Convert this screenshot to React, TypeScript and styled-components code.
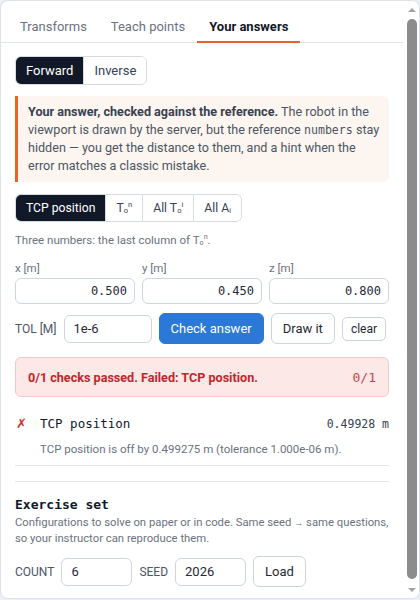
import { createGlobalStyle, styled } from "styled-components";

const GlobalStyle = createGlobalStyle`
  html, body {
    margin: 0;
    padding: 0;
    background: #eceff3;
    font-family: Roboto, "Noto Sans", sans-serif;
    color: #374151;
  }
  * {
    box-sizing: border-box;
  }
`;

const mono = `"DejaVu Sans Mono", "Liberation Mono", monospace`;

const Panel = styled.div`
  display: flex;
  width: 420px;
  height: 599px;
  background: #ffffff;
  border: 1px solid #dde2e9;
  border-radius: 8px;
  overflow: hidden;
`;

const Content = styled.div`
  flex: 1;
  min-width: 0;
  overflow: hidden;
`;

const ScrollTrack = styled.div`
  width: 15px;
  flex: none;
  display: flex;
  flex-direction: column;
  align-items: center;
  background: #ffffff;
`;

const Arrow = styled.div<{ $down?: boolean }>`
  height: 17px;
  display: flex;
  align-items: center;
  justify-content: center;
  &::after {
    content: "";
    border-left: 4px solid transparent;
    border-right: 4px solid transparent;
    ${(p) =>
      p.$down
        ? "border-top: 4px solid #a3a3a3;"
        : "border-bottom: 4px solid #a3a3a3;"}
  }
`;

const Thumb = styled.div`
  width: 10px;
  flex: 1;
  margin: 1px 0 2px;
  background: #8c8c8c;
  border-radius: 5px;
`;

const TabBar = styled.div`
  display: flex;
  padding: 0 7px;
  border-bottom: 1px solid #e1e5eb;
`;

const Tab = styled.div<{ $active?: boolean }>`
  padding: 17px 12px 6px;
  margin-bottom: -1px;
  font-size: 13px;
  line-height: 17px;
  white-space: nowrap;
  color: ${(p) => (p.$active ? "#111827" : "#6b7280")};
  font-weight: ${(p) => (p.$active ? 700 : 400)};
  border-bottom: 2px solid ${(p) => (p.$active ? "#e8622c" : "transparent")};
`;

const Body = styled.div`
  padding: 13px 15px 36px 14px;
`;

const Segmented = styled.div<{ $height: number }>`
  display: inline-flex;
  height: ${(p) => p.$height}px;
  border: 1px solid #d6dbe2;
  border-radius: 6px;
  overflow: hidden;
`;

const SegButton = styled.button<{ $active?: boolean; $size?: number }>`
  font-family: inherit;
  font-size: ${(p) => p.$size ?? 13}px;
  padding: 0 10px;
  white-space: nowrap;
  border: none;
  border-left: 1px solid #d6dbe2;
  background: ${(p) => (p.$active ? "#111827" : "#ffffff")};
  color: ${(p) => (p.$active ? "#ffffff" : "#374151")};
  &:first-child {
    border-left: none;
  }
`;

const Sub = styled.sub`
  font-size: 0.62em;
  line-height: 0;
  vertical-align: -1px;
`;

const Sup = styled.sup`
  font-size: 0.62em;
  line-height: 0;
  vertical-align: 5px;
`;

const Callout = styled.div`
  margin-top: 11px;
  padding: 7px 6px 7px 10px;
  background: #fdf5f0;
  border-left: 3px solid #e8622c;
  border-radius: 0 6px 6px 0;
  font-size: 12.6px;
  line-height: 18px;
  color: #4b5563;

  b {
    color: #374151;
  }
  code {
    font-family: ${mono};
    font-size: 11.6px;
  }
`;

const Tabs2 = styled.div`
  margin-top: 12px;
`;

const Hint = styled.div`
  margin-top: 10px;
  font-size: 11.5px;
  line-height: 16px;
  color: #6b7280;
`;

const VectorGrid = styled.div`
  margin-top: 12px;
  display: grid;
  grid-template-columns: repeat(3, 1fr);
  gap: 7px;
`;

const Field = styled.label`
  display: flex;
  flex-direction: column;
  gap: 2px;
  font-size: 11.5px;
  line-height: 16px;
  color: #6b7280;
`;

const NumInput = styled.input`
  height: 26px;
  width: 100%;
  border: 1px solid #cfd5dd;
  border-radius: 6px;
  padding: 0 7px;
  text-align: right;
  font-family: ${mono};
  font-size: 12px;
  color: #1f2937;
`;

const ActionRow = styled.div`
  margin-top: 9px;
  display: flex;
  align-items: center;
  gap: 7px;
`;

const SmallLabel = styled.span`
  font-size: 12px;
  white-space: nowrap;
  color: #4b5563;
  text-transform: uppercase;
`;

const TextInput = styled.input<{ $width: number }>`
  width: ${(p) => p.$width}px;
  height: 28px;
  border: 1px solid #cfd5dd;
  border-radius: 6px;
  padding: 0 9px;
  font-family: inherit;
  font-size: 13px;
  color: #1f2937;
`;

const Button = styled.button<{ $primary?: boolean; $small?: boolean }>`
  font-family: inherit;
  white-space: nowrap;
  height: ${(p) => (p.$small ? 24 : 31)}px;
  padding: 0 ${(p) => (p.$small ? 8 : 11)}px;
  font-size: ${(p) => (p.$small ? 12 : 13)}px;
  border-radius: ${(p) => (p.$small ? 5 : 6)}px;
  border: 1px solid ${(p) => (p.$primary ? "#2b78d6" : "#cdd3db")};
  background: ${(p) => (p.$primary ? "#2b78d6" : "#ffffff")};
  color: ${(p) => (p.$primary ? "#ffffff" : "#1f2937")};
`;

const Alert = styled.div`
  margin-top: 13px;
  height: 40px;
  display: flex;
  align-items: center;
  justify-content: space-between;
  padding: 0 12px;
  background: #fde8e8;
  border: 1px solid #f5c8c8;
  border-radius: 6px;
  color: #c0262d;
  font-size: 12.6px;
  font-weight: 700;
`;

const AlertCount = styled.span`
  font-family: ${mono};
  font-weight: 400;
  font-size: 13px;
  color: #c0474b;
`;

const Result = styled.div`
  margin-top: 18px;
  padding-bottom: 8px;
  border-bottom: 1px solid #e1e5eb;
`;

const ResultHead = styled.div`
  display: flex;
  align-items: center;
  line-height: 18px;
`;

const Cross = styled.span`
  width: 25px;
  padding-left: 1px;
  color: #d32f2f;
  font-family: "DejaVu Sans", sans-serif;
  font-size: 13px;
`;

const ResultName = styled.span`
  flex: 1;
  font-family: ${mono};
  font-size: 12.5px;
  color: #111827;
`;

const ResultValue = styled.span`
  font-family: ${mono};
  font-size: 11.5px;
  color: #374151;
`;

const ResultDetail = styled.div`
  margin-top: 8px;
  padding-left: 25px;
  font-size: 11.5px;
  line-height: 16px;
  color: #6b7280;
`;

const Section = styled.div`
  margin-top: 15px;
  padding-top: 14px;
  border-top: 1px solid #e1e5eb;
`;

const SectionTitle = styled.div`
  font-family: ${mono};
  font-weight: 700;
  font-size: 13px;
  line-height: 18px;
  color: #111827;
`;

const SectionText = styled.div`
  margin-top: 1px;
  font-size: 11.3px;
  line-height: 16px;
  color: #6b7280;
`;

const SmallArrow = styled.span`
  font-size: 9px;
  line-height: 0;
`;

const LoadRow = styled.div`
  margin-top: 9px;
  display: flex;
  align-items: center;
  gap: 7px;
`;

export default function App() {
  return (
    <>
      <GlobalStyle />
      <Panel>
        <Content>
          <TabBar>
            <Tab>Transforms</Tab>
            <Tab>Teach points</Tab>
            <Tab $active>Your answers</Tab>
          </TabBar>
          <Body>
            <Segmented $height={29}>
              <SegButton $active>Forward</SegButton>
              <SegButton>Inverse</SegButton>
            </Segmented>

            <Callout>
              <b>Your answer, checked against the reference.</b> The robot in
              the viewport is drawn by the server, but the reference{" "}
              <code>numbers</code> stay hidden — you get the distance to them,
              and a hint when the error matches a classic mistake.
            </Callout>

            <Tabs2>
              <Segmented $height={28}>
                <SegButton $active $size={12.2}>
                  TCP position
                </SegButton>
                <SegButton $size={12.2}>
                  T<Sub>o</Sub>
                  <Sup>n</Sup>
                </SegButton>
                <SegButton $size={12.2}>
                  All T<Sub>o</Sub>
                  <Sup>i</Sup>
                </SegButton>
                <SegButton $size={12.2}>
                  All A<Sub>i</Sub>
                </SegButton>
              </Segmented>
            </Tabs2>

            <Hint>
              Three numbers: the last column of T<Sub>o</Sub>
              <Sup>n</Sup>.
            </Hint>

            <VectorGrid>
              <Field>
                x [m]
                <NumInput defaultValue="0.500" />
              </Field>
              <Field>
                y [m]
                <NumInput defaultValue="0.450" />
              </Field>
              <Field>
                z [m]
                <NumInput defaultValue="0.800" />
              </Field>
            </VectorGrid>

            <ActionRow>
              <SmallLabel>tol [m]</SmallLabel>
              <TextInput $width={88} defaultValue="1e-6" />
              <Button $primary>Check answer</Button>
              <Button>Draw it</Button>
              <Button $small>clear</Button>
            </ActionRow>

            <Alert>
              <span>0/1 checks passed. Failed: TCP position.</span>
              <AlertCount>0/1</AlertCount>
            </Alert>

            <Result>
              <ResultHead>
                <Cross>✗</Cross>
                <ResultName>TCP position</ResultName>
                <ResultValue>0.49928 m</ResultValue>
              </ResultHead>
              <ResultDetail>
                TCP position is off by 0.499275 m (tolerance 1.000e-06 m).
              </ResultDetail>
            </Result>

            <Section>
              <SectionTitle>Exercise set</SectionTitle>
              <SectionText>
                Configurations to solve on paper or in code. Same seed{" "}
                <SmallArrow>→</SmallArrow> same questions, so your instructor
                can reproduce them.
              </SectionText>
              <LoadRow>
                <SmallLabel>count</SmallLabel>
                <TextInput $width={71} defaultValue="6" />
                <SmallLabel>seed</SmallLabel>
                <TextInput $width={71} defaultValue="2026" />
                <Button>Load</Button>
              </LoadRow>
            </Section>
          </Body>
        </Content>
        <ScrollTrack>
          <Arrow />
          <Thumb />
          <Arrow $down />
        </ScrollTrack>
      </Panel>
    </>
  );
}
